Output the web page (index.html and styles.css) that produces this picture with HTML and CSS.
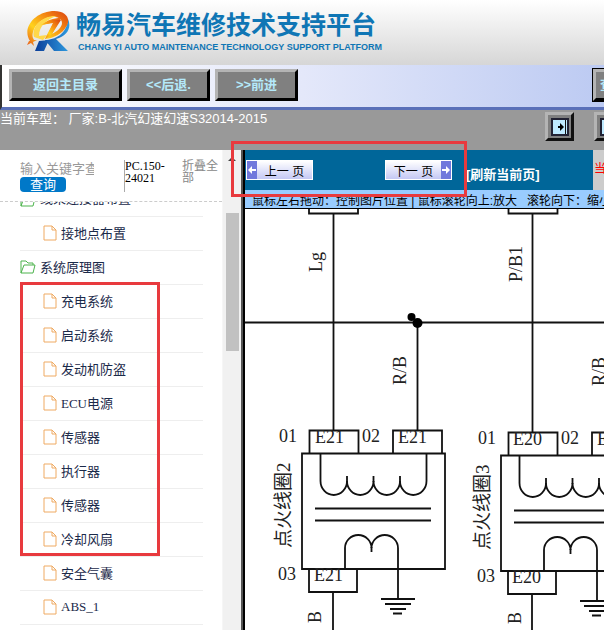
FILE: index.html
```html
<!DOCTYPE html>
<html lang="zh-CN">
<head>
<meta charset="utf-8">
<title>畅易汽车维修技术支持平台</title>
<link rel="stylesheet" href="styles.css">
</head>
<body>
<header class="brand">
  <svg class="logo" viewBox="0 0 46 42" aria-hidden="true">
    <defs>
      <linearGradient id="flame" x1="1" y1="0" x2="0" y2="1">
        <stop offset="0" stop-color="#d9420f"/><stop offset=".35" stop-color="#f58a12"/><stop offset=".65" stop-color="#ffd21c"/><stop offset="1" stop-color="#e8581a"/>
      </linearGradient>
      <linearGradient id="steel" x1="0" y1="0" x2="1" y2="0">
        <stop offset="0" stop-color="#0b3d98"/><stop offset="1" stop-color="#2e9be0"/>
      </linearGradient>
    </defs>
    <path fill="url(#steel)" d="M43 9c4 9-1 17-12 20l12 12H29L20 30c10 0 22-6 23-21zM14 31l10-1-5 11H10z"/>
    <path fill="url(#flame)" d="M5 31C-3 19 8 3 27 1c13-1 20 7 14 16-4 7-12 11-21 12l9-17-12 3c5-5 11-7 19-7l-9 16c8-4 12-10 9-14C31 3 14 8 9 19c-2 5-2 8 0 11l3 0-4 2 1 4-3-3-4 2 2-4z"/>
    <path fill="#ffd84a" d="M9 27C6 16 18 5 32 6 22 9 14 16 14 26l8-1-4 5z"/>
    <path fill="url(#flame)" d="M16 15c6-4 12-6 20-5l-9 14-7 5 8-16z"/>
  </svg>
  <div class="brand-text">
    <h1>畅易汽车维修技术支持平台</h1>
    <p>CHANG YI AUTO MAINTENANCE TECHNOLOGY SUPPORT PLATFORM</p>
  </div>
</header>
<nav class="toolbar">
  <button class="bevel home">返回主目录</button>
  <button class="bevel">&lt;&lt;后退.</button>
  <button class="bevel">&gt;&gt;前进</button>
  <button class="bevel find">查找</button>
</nav>
<section class="info">
  <p>当前车型： 厂家:B-北汽幻速幻速S32014-2015</p>
  <div class="info-tools">
    <button class="pane-btn" aria-label="展开">
      <svg viewBox="0 0 18 18"><path fill="#bfeaff" stroke="#223" stroke-width="2" d="M1 1h16v16H1z"/><path stroke="#111" d="M14.500 2v14"/><path d="M9 5l4 4-4 4zM7 8h3v2H7z"/></svg>
    </button>
    <button class="pane-btn" aria-label="收起">
      <svg viewBox="0 0 18 18"><path fill="#bfeaff" stroke="#223" stroke-width="2" d="M1 1h16v16H1z"/><path d="M8 5L4 9l4 4zM8 8h3v2H8z"/></svg>
    </button>
  </div>
</section>
<main class="work">
  <aside class="side">
    <div class="side-body">
      <div class="search">
        <form class="search-form">
          <input type="text" aria-label="关键字" placeholder="输入关键字查询">
          <button type="button">查询</button>
        </form>
        <span class="code">PC.150-24021</span>
        <a class="fold" href="#">折叠全部</a>
      </div>
      <ul class="tree">
        <li class="folder cut"><svg class="ico-folder" viewBox="0 0 16 14"><path d="M1 13V1h5l2 2h5v2M1 13L4 5h11l-2 8z"/></svg><a href="#">线束连接器布置</a></li>
        <li><svg class="ico-file" viewBox="0 0 14 16"><path d="M1 1h8l4 4v10H1zM9 1v4h4"/></svg><a href="#">接地点布置</a></li>
        <li class="folder"><svg class="ico-folder" viewBox="0 0 16 14"><path d="M1 13V1h5l2 2h5v2M1 13L4 5h11l-2 8z"/></svg><a href="#">系统原理图</a></li>
        <li><svg class="ico-file" viewBox="0 0 14 16"><path d="M1 1h8l4 4v10H1zM9 1v4h4"/></svg><a href="#">充电系统</a></li>
        <li><svg class="ico-file" viewBox="0 0 14 16"><path d="M1 1h8l4 4v10H1zM9 1v4h4"/></svg><a href="#">启动系统</a></li>
        <li><svg class="ico-file" viewBox="0 0 14 16"><path d="M1 1h8l4 4v10H1zM9 1v4h4"/></svg><a href="#">发动机防盗</a></li>
        <li><svg class="ico-file" viewBox="0 0 14 16"><path d="M1 1h8l4 4v10H1zM9 1v4h4"/></svg><a href="#">ECU电源</a></li>
        <li><svg class="ico-file" viewBox="0 0 14 16"><path d="M1 1h8l4 4v10H1zM9 1v4h4"/></svg><a href="#">传感器</a></li>
        <li><svg class="ico-file" viewBox="0 0 14 16"><path d="M1 1h8l4 4v10H1zM9 1v4h4"/></svg><a href="#">执行器</a></li>
        <li><svg class="ico-file" viewBox="0 0 14 16"><path d="M1 1h8l4 4v10H1zM9 1v4h4"/></svg><a href="#">传感器</a></li>
        <li><svg class="ico-file" viewBox="0 0 14 16"><path d="M1 1h8l4 4v10H1zM9 1v4h4"/></svg><a href="#">冷却风扇</a></li>
        <li><svg class="ico-file" viewBox="0 0 14 16"><path d="M1 1h8l4 4v10H1zM9 1v4h4"/></svg><a href="#">安全气囊</a></li>
        <li><svg class="ico-file" viewBox="0 0 14 16"><path d="M1 1h8l4 4v10H1zM9 1v4h4"/></svg><a href="#">ABS_1</a></li>
      </ul>
    </div>
    <div class="scroll"><span class="scroll-up"></span><span class="thumb"></span></div>
  </aside>
  <section class="viewer">
    <div class="pager">
      <div class="pager-main">
        <button class="page-btn"><svg viewBox="0 0 10 16"><path d="M1 8l4-4v3h4v2H5v3z"/></svg><span>上一 页</span></button>
        <button class="page-btn next"><span>下一 页</span><svg viewBox="0 0 10 16"><path d="M9 8L5 4v3H1v2h4v3z"/></svg></button>
        <a class="refresh" href="#">[刷新当前页]</a>
      </div>
      <div class="current">当前</div>
    </div>
    <p class="hint">鼠标左右拖动：控制图片位置 | 鼠标滚轮向上:放大 &nbsp; 滚轮向下：缩小</p>
    <div class="canvas">
      <svg class="diagram" viewBox="245 209 359 421" preserveAspectRatio="xMinYMin slice">
        <defs>
          <g id="coil">
            <path d="M309 205v8.500h49V205M333.500 213.500V430M417.500 323V430"/>
            <path d="M309.500 453V430.500h49V453M393 453V430.500h49V453M302 453.500h143V569H302zM309 569v23h48v-23M333 592v50"/>
            <path d="M320.500 454v27a13.250 14 0 0 0 26.500 0a13.250 14 0 0 0 26.500 0a13.250 14 0 0 0 26.500 0a13.250 14 0 0 0 26.500 0V454"/>
            <path d="M315 508.500h116M315 520.500h116M345 569v-21a13.250 13 0 0 1 26.500 0a13.250 13 0 0 1 26.500 0v51M381 599h34M385 604h26M390 609h16M393 613.500h9"/>
            <path d="M347 476v6M373.500 476v6M400 476v6M371.500 547v5"/>
          </g>
        </defs>
        <g class="wire">
          <path d="M245 322.500h359"/>
          <use href="#coil"/>
          <path d="M508.500 205v8.500h49V205M532.500 213.500V412"/>
          <svg x="446" y="412" width="158" height="230" viewBox="446 412 158 230"><use href="#coil" x="199" y="2"/></svg>
        </g>
        <circle cx="411.500" cy="317" r="4"/><circle cx="417.500" cy="323" r="5"/>
        <g class="label">
          <text x="279" y="442">01</text><text x="315" y="443">E21</text><text x="362" y="442">02</text><text x="398" y="443">E21</text>
          <text x="278" y="580">03</text><text x="314" y="581">E21</text>
          <text x="478" y="444">01</text><text x="513" y="445">E20</text><text x="561" y="444">02</text><text x="597" y="445">E20</text>
          <text x="477" y="582">03</text><text x="512" y="583">E20</text>
          <text transform="translate(322 272) rotate(-90)">Lg</text>
          <text transform="translate(522 282) rotate(-90)">P/B1</text>
          <text transform="translate(406 385) rotate(-90)">R/B</text>
          <text transform="translate(605 386) rotate(-90)">R/B</text>
          <text transform="translate(321 623) rotate(-90)">B</text>
          <text transform="translate(521 624) rotate(-90)">B</text>
          <text class="name" transform="translate(290 548) rotate(-90)">点火线圈2</text>
          <text class="name" transform="translate(489 550) rotate(-90)">点火线圈3</text>
        </g>
      </svg>
    </div>
  </section>
</main>
<div class="mark mark-pager"></div>
<div class="mark mark-tree"></div>
</body>
</html>
```
FILE: styles.css
```css
* { box-sizing: border-box; }
body {
  margin: 0;
  height: 100vh;
  display: flex;
  flex-direction: column;
  overflow: hidden;
  position: relative;
  background: #fff;
  font-family: "Liberation Sans", "Noto Sans CJK SC", sans-serif;
  font-size: 13px;
}
h1, p, ul { margin: 0; padding: 0; }
a { text-decoration: none; color: inherit; }
button { font-family: inherit; padding: 0; white-space: nowrap; }

.brand {
  flex: none;
  display: flex;
  gap: 5px;
  height: 65px;
  padding: 10px 0 0 25px;
  background: linear-gradient(#fff, #d6d6d6);
}
.logo { width: 46px; height: 42px; }
.brand-text { color: #0f76b5; white-space: nowrap; }
.brand-text h1 { font-size: 25px; line-height: 31px; font-weight: 700; }
.brand-text p { font-size: 9px; line-height: 12px; font-weight: 700; padding-left: 2px; }

.toolbar {
  flex: none;
  display: flex;
  gap: 5px;
  height: 45px;
  padding: 4px 0 0 7px;
  border-left: 2px solid #333;
  border-bottom: 3px solid #5a70b8;
  background: linear-gradient(90deg, #fff, #e4e8fa 50%, #bccaf2);
  overflow: hidden;
}
.bevel {
  flex: none;
  width: 83px;
  height: 32px;
  border: 3px solid;
  border-color: #b4b4b4 #000 #000 #b4b4b4;
  background: #808080;
  color: #b4e9fa;
  font-size: 13px;
  line-height: 20px;
  font-weight: 700;
}
.home { width: 113px; }
.find { margin-left: auto; margin-right: -72px; text-align: left; padding-left: 4px; outline: 1px solid #000; }

.info {
  flex: none;
  display: flex;
  justify-content: space-between;
  height: 40px;
  background: #999;
  color: #fff;
  overflow: hidden;
}
.info p { line-height: 18px; white-space: nowrap; }
.info-tools { display: flex; gap: 20px; padding-top: 2px; margin-right: -19px; }
.pane-btn {
  width: 29px;
  height: 29px;
  border: 3px solid;
  border-color: #b4b4b4 #111 #111 #b4b4b4;
  background: #808080;
}
.pane-btn svg { display: block; width: 18px; height: 18px; margin: auto; }

.work { flex: 1; display: flex; min-height: 0; }
.side { flex: none; width: 241px; display: flex; }
.side-body { flex: 1; min-width: 0; display: flex; flex-direction: column; border-right: 1px solid #f6f6f6; }
.search { flex: none; display: flex; height: 52px; padding: 10px 0 0 20px; border-bottom: 1px dashed #ccc; }
.search-form { width: 104px; }
.search-form input {
  display: block;
  width: 74px;
  height: 17px;
  padding: 0;
  border: 0;
  font: inherit;
  line-height: 17px;
}
.search-form input::placeholder { color: #999; }
.search-form button {
  display: block;
  width: 46px;
  height: 15px;
  border: 0;
  border-radius: 4px;
  background: #0078c8;
  color: #fff;
  font-size: 13px;
  line-height: 15px;
}
.code {
  width: 58px;
  height: 32px;
  padding-right: 10px;
  border-left: 1px solid #aaa;
  font: 12px/12px "Liberation Serif", serif;
}
.fold { width: 38px; color: #888; font-size: 12px; line-height: 12px; }
.tree {
  flex: 1;
  min-height: 0;
  overflow: hidden;
  list-style: none;
  padding: 0 19px 0 20px;
  color: #1b2a4a;
  font-family: "Liberation Serif", "Noto Sans CJK SC", serif;
}
.tree li {
  display: flex;
  align-items: center;
  gap: 4px;
  height: 34px;
  padding: 0 0 2px 23px;
  border-bottom: 1px solid #eee;
}
.tree .folder { padding-left: 0; }
.tree .cut { height: 15px; align-items: flex-end; padding-bottom: 9px; overflow: hidden; }
.ico-folder, .ico-file { flex: none; fill: none; stroke-width: 1; }
.ico-folder { width: 16px; height: 14px; stroke: #4cb34c; }
.ico-file { width: 14px; height: 16px; stroke: #efaa62; }
.scroll { flex: none; width: 18px; background: #f1f1f1; display: flex; flex-direction: column; align-items: center; }
.scroll-up { border: 4px solid transparent; border-top: 0; border-bottom-color: #444; margin: 7px 0 52px; }
.thumb { width: 13px; height: 138px; background: #c1c1c1; }

.viewer {
  flex: 1;
  min-width: 0;
  display: flex;
  flex-direction: column;
  padding-left: 2px;
  border-left: 2px solid #555;
  background: linear-gradient(90deg, #000 2px, #fff 2px);
}
.pager { flex: none; display: flex; height: 40px; }
.pager-main { flex: 1; display: flex; align-items: flex-start; padding: 10px 0 0 1px; background: #069; }
.page-btn {
  display: flex;
  align-items: center;
  width: 67px;
  height: 20px;
  border: 1px solid #fff;
  background: linear-gradient(#fff, #c4c8f4);
  font-size: 12px;
  color: #000;
}
.page-btn span { flex: 1; word-spacing: normal; }
.page-btn svg { width: 10px; height: 18px; background: #7078dc; fill: #fff; }
.next { margin-left: 72px; }
.refresh { margin-left: 14px; padding-top: 6px; line-height: 18px; color: #fff; font-weight: 700; white-space: nowrap; }
.current { flex: none; width: 11px; padding: 10px 0 0 1px; overflow: hidden; white-space: nowrap; background: #ccc; color: #f00; font-size: 12px; line-height: 18px; }
.hint {
  flex: none;
  height: 19px;
  padding: 2px 0 0 7px;
  border-bottom: 1px solid #000;
  background: #9cf;
  font-size: 12px;
  line-height: 18px;
  white-space: nowrap;
  overflow: hidden;
}
.canvas { flex: 1; min-height: 0; overflow: hidden; }
.diagram { display: block; width: 100%; height: 100%; }
.wire { fill: none; stroke: #111; stroke-width: 1.8; }
.label { font: 18px "Liberation Serif", "Noto Sans CJK SC", serif; fill: #222; }
.name { font-size: 19px; }

.mark { position: absolute; border: 3px solid #e83a3e; pointer-events: none; }
.mark-pager { left: 231px; top: 141px; width: 236px; height: 56px; }
.mark-tree { left: 20px; top: 282px; width: 140px; height: 274px; }
```
